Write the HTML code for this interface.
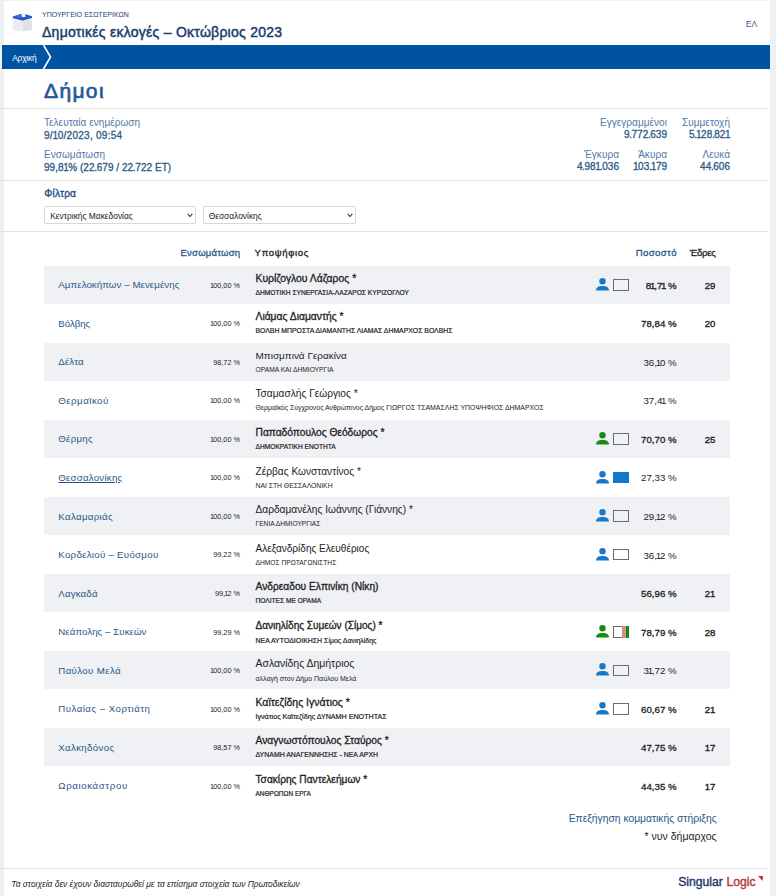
<!DOCTYPE html>
<html><head><meta charset="utf-8">
<style>
*{box-sizing:border-box;margin:0;padding:0}
.sb{-webkit-text-stroke:0.3px currentColor}
html,body{width:776px;height:896px;overflow:hidden;background:#eff0f2;font-family:"Liberation Sans",sans-serif}
#page{position:absolute;left:4px;top:1px;width:766px;height:895px;background:#fff}
.a{position:absolute;white-space:nowrap;line-height:1}
.hr{position:absolute;left:0;width:768px;height:1px;background:#e3e3e3}
.lbl{font-size:10px;color:#4f79a9;letter-spacing:0.05px}
.val{font-size:10px;color:#2c5986;-webkit-text-stroke:0.3px currentColor}
.val i{font-style:normal;margin:0 -0.5px}
.val b{font-weight:normal;margin:0 -0.35px}
.sel{height:17.5px;border:1px solid #d9d9d9;border-radius:2px;background:#fff;font-size:8.4px;color:#222}
.sel span{position:absolute;left:5.2px;top:5.4px}
.sel svg{position:absolute;right:2.1px;top:5.8px}
.th{font-size:9.6px;-webkit-text-stroke:0.3px currentColor;top:248.27px}
.row{position:absolute;left:44px;width:686px;height:38.3px}
.row.odd{background:#eff1f4}
.row .a{position:absolute}
.dn{left:14.3px;top:14.79px;font-size:9.7px;color:#285889}
.dn.ul{text-decoration:underline}
.inc{right:490px;top:16.12px;font-size:7.3px;color:#222}
.inc i{font-style:normal;margin:0 -0.9px}
.cn{left:211.5px;top:8.4px;font-size:10px;color:#222}
.cn.w{font-size:10.5px;top:8.0px;-webkit-text-stroke:0.3px currentColor}
.pt{left:211.5px;top:24.6px;font-size:6.6px;color:#222}
.pt.w{-webkit-text-stroke:0.2px currentColor}
.pi{position:absolute;left:552px;top:12.4px}
.bx{position:absolute;left:569px;top:13.5px;width:16px;height:11.6px;border:1px solid #6b6b6b}
.pc{right:53.4px;top:15.19px;font-size:9.7px;color:#222}
.pc i,.st i{font-style:normal;margin:0 -1.2px}
.pc.w{-webkit-text-stroke:0.3px currentColor}
.st{right:14.7px;top:15.27px;font-size:9.6px;color:#222;-webkit-text-stroke:0.35px currentColor}
</style></head><body>
<div id="page"></div>
<svg class="a" style="left:8px;top:8px" width="30" height="30" viewBox="0 0 30 30">
  <polygon points="4.9,11.5 14.6,13.2 14.6,23.3 4.9,22.2" fill="#ececf4"/>
  <polygon points="14.6,13.2 24,11.5 24,22.2 14.6,23.3" fill="#e0e0e9"/>
  <polygon points="4.8,8.4 12.5,6 17.5,6.2 24,8.2 24,10 14.7,12.8 4.8,10.3" fill="#2d58bd"/>
  <polygon points="6.5,8.6 12.8,6.8 14,9.8" fill="#3f6fd4"/>
  <polygon points="13,5 16.8,4.7 17.6,8.8 14.2,9.3" fill="#f3f7ff"/>
</svg>
<div class="a" style="left:42px;top:10.8px;font-size:7px;color:#26406e">ΥΠΟΥΡΓΕΙΟ ΕΣΩΤΕΡΙΚΩΝ</div>
<div class="a" style="left:42px;top:24.85px;font-size:14px;letter-spacing:0.26px;-webkit-text-stroke:0.45px currentColor;color:#1b3a6b">Δημοτικές εκλογές – Οκτώβριος 2023</div>
<div class="a" style="left:745.8px;top:19.52px;font-size:8.6px;color:#3b5a8c">ΕΛ</div>
<div class="a" style="left:2px;top:45px;width:768px;height:24px;background:#0053a0"></div>
<svg class="a" style="left:42px;top:45px" width="12" height="24" viewBox="0 0 12 24"><polyline points="1.5,0 8.5,12 1.5,24" fill="none" stroke="#fff" stroke-width="1.6"/></svg>
<div class="a" style="left:12.2px;top:53.8px;font-size:8.4px;letter-spacing:-0.2px;color:#fff">Αρχική</div>
<div class="a" style="left:44px;top:79.92px;font-size:21px;letter-spacing:1.35px;-webkit-text-stroke:0.7px currentColor;color:#1d5a97">Δήμοι</div>
<div class="hr" style="top:108px"></div>
<div class="a lbl" style="left:44px;top:118.1px">Τελευταία ενημέρωση</div>
<div class="a val" style="left:44px;top:130.54px;letter-spacing:0.27px">9/<i>1</i>0/2023, 09:54</div>
<div class="a lbl" style="left:44px;top:149.9px">Ενσωμάτωση</div>
<div class="a val" style="left:44px;top:162.94px;letter-spacing:0.04px">99,8<i>1</i>% (22<b>.</b>679 / 22<b>.</b>722 ΕΤ)</div>
<div class="a lbl" style="right:109px;top:118.1px;text-align:right">Εγγεγραμμένοι</div>
<div class="a val" style="right:109px;top:129.94px;text-align:right">9<b>.</b>772<b>.</b>639</div>
<div class="a lbl" style="right:46px;top:118.1px;text-align:right">Συμμετοχή</div>
<div class="a val" style="right:46px;top:129.94px;text-align:right">5<b>.</b><i>1</i>28<b>.</b>82<i>1</i></div>
<div class="a lbl" style="right:157px;top:149.9px;text-align:right">Έγκυρα</div>
<div class="a val" style="right:157px;top:162.24px;text-align:right">4<b>.</b>98<i>1</i><b>.</b>036</div>
<div class="a lbl" style="right:109px;top:149.9px;text-align:right">Άκυρα</div>
<div class="a val" style="right:109px;top:162.24px;text-align:right"><i>1</i>03<b>.</b><i>1</i>79</div>
<div class="a lbl" style="right:46px;top:149.9px;text-align:right">Λευκά</div>
<div class="a val" style="right:46px;top:162.24px;text-align:right">44<b>.</b>606</div>
<div class="hr" style="top:180px"></div>
<div class="a" style="left:44.3px;top:189px;font-size:10.2px;letter-spacing:0.1px;-webkit-text-stroke:0.35px currentColor;color:#1f4f86">Φίλτρα</div>
<div class="a sel" style="left:44px;top:206px;width:152px"><span>Κεντρικής Μακεδονίας</span><svg width="6" height="5" viewBox="0 0 6 5"><polyline points="0.6,0.9 3,3.5 5.4,0.9" fill="none" stroke="#333" stroke-width="1.1"/></svg></div>
<div class="a sel" style="left:202.5px;top:206px;width:153.2px"><span>Θεσσαλονίκης</span><svg width="6" height="5" viewBox="0 0 6 5"><polyline points="0.6,0.9 3,3.5 5.4,0.9" fill="none" stroke="#333" stroke-width="1.1"/></svg></div>
<div class="hr" style="top:231px"></div>
<div class="a th" style="right:535.8px;letter-spacing:0.18px;margin-right:-0.18px;color:#285889">Ενσωμάτωση</div>
<div class="a th" style="left:254.6px;letter-spacing:0.64px;color:#222">Υποψήφιος</div>
<div class="a th" style="right:99.4px;letter-spacing:0.38px;margin-right:-0.38px;color:#285889">Ποσοστό</div>
<div class="a th" style="right:60px;letter-spacing:-0.22px;margin-right:0.22px;color:#222">Έδρες</div>
<div class="row odd" style="top:265.5px"><div class="a dn" style="letter-spacing:0.074px">Αμπελοκήπων – Μενεμένης</div><div class="a inc"><i>1</i>00,00 %</div><div class="a cn w" style="font-size:10.37px;top:8.12px">Κυρίζογλου Λάζαρος *</div><div class="a pt w" style="font-size:6.67px;top:24.55px">ΔΗΜΟΤΙΚΗ ΣΥΝΕΡΓΑΣΙΑ-ΛΑΖΑΡΟΣ ΚΥΡΙΖΟΓΛΟΥ</div><svg class="pi" width="14" height="13" viewBox="0 0 14 13"><circle cx="6.5" cy="3.3" r="3.2" fill="#1877c9"/><path d="M0,12.6 C0,9 2.6,7.9 6.5,7.9 C10.4,7.9 13,9 13,12.6 Z" fill="#1877c9"/></svg><div class="bx"></div><div class="a pc w">8<i>1</i>,7<i>1</i> %</div><div class="a st">29</div></div>
<div class="row" style="top:304.05px"><div class="a dn" style="letter-spacing:-0.034px">Βόλβης</div><div class="a inc"><i>1</i>00,00 %</div><div class="a cn w" style="font-size:10.30px;top:8.18px">Λιάμας Διαμαντής *</div><div class="a pt w" style="font-size:6.86px;top:24.39px">ΒΟΛΒΗ ΜΠΡΟΣΤΑ ΔΙΑΜΑΝΤΗΣ ΛΙΑΜΑΣ ΔΗΜΑΡΧΟΣ ΒΟΛΒΗΣ</div><div class="a pc w">78,84 %</div><div class="a st">20</div></div>
<div class="row odd" style="top:342.6px"><div class="a dn" style="letter-spacing:0.094px">Δέλτα</div><div class="a inc">98,72 %</div><div class="a cn" style="font-size:9.98px;top:8.46px">Μπισμπινά Γερακίνα</div><div class="a pt" style="font-size:6.70px;top:24.53px">ΟΡΑΜΑ ΚΑΙ ΔΗΜΙΟΥΡΓΙΑ</div><div class="a pc">36,<i>1</i>0 %</div></div>
<div class="row" style="top:381.15px"><div class="a dn" style="letter-spacing:0.486px">Θερμαϊκού</div><div class="a inc"><i>1</i>00,00 %</div><div class="a cn" style="font-size:10.16px;top:8.30px">Τσαμασλής Γεώργιος *</div><div class="a pt" style="font-size:6.93px;top:24.33px">Θερμαϊκός Σύγχρονος Ανθρώπινος Δήμος ΓΙΩΡΓΟΣ ΤΣΑΜΑΣΛΗΣ ΥΠΟΨΗΦΙΟΣ ΔΗΜΑΡΧΟΣ</div><div class="a pc">37,4<i>1</i> %</div></div>
<div class="row odd" style="top:419.7px"><div class="a dn" style="letter-spacing:0.273px">Θέρμης</div><div class="a inc"><i>1</i>00,00 %</div><div class="a cn w" style="font-size:10.23px;top:8.24px">Παπαδόπουλος Θεόδωρος *</div><div class="a pt w" style="font-size:6.64px;top:24.58px">ΔΗΜΟΚΡΑΤΙΚΗ ΕΝΟΤΗΤΑ</div><svg class="pi" width="14" height="13" viewBox="0 0 14 13"><circle cx="6.5" cy="3.3" r="3.2" fill="#178a17"/><path d="M0,12.6 C0,9 2.6,7.9 6.5,7.9 C10.4,7.9 13,9 13,12.6 Z" fill="#178a17"/></svg><div class="bx"></div><div class="a pc w">70,70 %</div><div class="a st">25</div></div>
<div class="row" style="top:458.25px"><div class="a dn ul" style="letter-spacing:0.225px">Θεσσαλονίκης</div><div class="a inc"><i>1</i>00,00 %</div><div class="a cn" style="font-size:10.16px;top:8.30px">Ζέρβας Κωνσταντίνος *</div><div class="a pt" style="font-size:6.81px;top:24.44px">ΝΑΙ ΣΤΗ ΘΕΣΣΑΛΟΝΙΚΗ</div><svg class="pi" width="14" height="13" viewBox="0 0 14 13"><circle cx="6.5" cy="3.3" r="3.2" fill="#1877c9"/><path d="M0,12.6 C0,9 2.6,7.9 6.5,7.9 C10.4,7.9 13,9 13,12.6 Z" fill="#1877c9"/></svg><div class="bx" style="background:#1177cf;border-color:#1177cf"></div><div class="a pc">27,33 %</div></div>
<div class="row odd" style="top:496.79999999999995px"><div class="a dn" style="letter-spacing:0.335px">Καλαμαριάς</div><div class="a inc"><i>1</i>00,00 %</div><div class="a cn" style="font-size:10.16px;top:8.30px">Δαρδαμανέλης Ιωάννης (Γιάννης) *</div><div class="a pt" style="font-size:6.67px;top:24.56px">ΓΕΝΙΑ ΔΗΜΙΟΥΡΓΙΑΣ</div><svg class="pi" width="14" height="13" viewBox="0 0 14 13"><circle cx="6.5" cy="3.3" r="3.2" fill="#1877c9"/><path d="M0,12.6 C0,9 2.6,7.9 6.5,7.9 C10.4,7.9 13,9 13,12.6 Z" fill="#1877c9"/></svg><div class="bx"></div><div class="a pc">29,<i>1</i>2 %</div></div>
<div class="row" style="top:535.3499999999999px"><div class="a dn" style="letter-spacing:0.283px">Κορδελιού – Ευόσμου</div><div class="a inc">99,22 %</div><div class="a cn" style="font-size:10.06px;top:8.38px">Αλεξανδρίδης Ελευθέριος</div><div class="a pt" style="font-size:6.68px;top:24.55px">ΔΗΜΟΣ ΠΡΩΤΑΓΩΝΙΣΤΗΣ</div><svg class="pi" width="14" height="13" viewBox="0 0 14 13"><circle cx="6.5" cy="3.3" r="3.2" fill="#1877c9"/><path d="M0,12.6 C0,9 2.6,7.9 6.5,7.9 C10.4,7.9 13,9 13,12.6 Z" fill="#1877c9"/></svg><div class="bx"></div><div class="a pc">36,<i>1</i>2 %</div></div>
<div class="row odd" style="top:573.9px"><div class="a dn" style="letter-spacing:0.161px">Λαγκαδά</div><div class="a inc">99,<i>1</i>2 %</div><div class="a cn w" style="font-size:10.22px;top:8.25px">Ανδρεαδου Ελπινίκη (Νίκη)</div><div class="a pt w" style="font-size:6.62px;top:24.59px">ΠΟΛΙΤΕΣ ΜΕ ΟΡΑΜΑ</div><div class="a pc w">56,96 %</div><div class="a st">21</div></div>
<div class="row" style="top:612.45px"><div class="a dn" style="letter-spacing:0.059px">Νεάπολης – Συκεών</div><div class="a inc">99,29 %</div><div class="a cn w" style="font-size:10.04px;top:8.40px">Δανιηλίδης Συμεών (Σίμος) *</div><div class="a pt w" style="font-size:6.98px;top:24.29px">ΝΕΑ ΑΥΤΟΔΙΟΙΚΗΣΗ Σίμος Δανιηλίδης</div><svg class="pi" width="14" height="13" viewBox="0 0 14 13"><circle cx="6.5" cy="3.3" r="3.2" fill="#178a17"/><path d="M0,12.6 C0,9 2.6,7.9 6.5,7.9 C10.4,7.9 13,9 13,12.6 Z" fill="#178a17"/></svg><div class="bx" style="width:8.6px;border-right:none;background:#fff"></div><div class="bx" style="left:577.6px;width:7.4px;border:none;background:linear-gradient(90deg,#cf918c 0,#cf918c 4.1px,#168a16 4.1px)"></div><div class="a pc w">78,79 %</div><div class="a st">28</div></div>
<div class="row odd" style="top:651.0px"><div class="a dn" style="letter-spacing:0.365px">Παύλου Μελά</div><div class="a inc"><i>1</i>00,00 %</div><div class="a cn" style="font-size:10.45px;top:8.05px">Ασλανίδης Δημήτριος</div><div class="a pt" style="font-size:6.99px;top:24.28px">αλλαγή στον Δήμο Παύλου Μελά</div><svg class="pi" width="14" height="13" viewBox="0 0 14 13"><circle cx="6.5" cy="3.3" r="3.2" fill="#1877c9"/><path d="M0,12.6 C0,9 2.6,7.9 6.5,7.9 C10.4,7.9 13,9 13,12.6 Z" fill="#1877c9"/></svg><div class="bx"></div><div class="a pc">3<i>1</i>,72 %</div></div>
<div class="row" style="top:689.55px"><div class="a dn" style="letter-spacing:0.458px">Πυλαίας – Χορτιάτη</div><div class="a inc"><i>1</i>00,00 %</div><div class="a cn w" style="font-size:10.48px;top:8.03px">Καϊτεζίδης Ιγνάτιος *</div><div class="a pt w" style="font-size:7.15px;top:24.15px">Ιγνάτιος Καϊτεζίδης ΔΥΝΑΜΗ ΕΝΟΤΗΤΑΣ</div><svg class="pi" width="14" height="13" viewBox="0 0 14 13"><circle cx="6.5" cy="3.3" r="3.2" fill="#1877c9"/><path d="M0,12.6 C0,9 2.6,7.9 6.5,7.9 C10.4,7.9 13,9 13,12.6 Z" fill="#1877c9"/></svg><div class="bx"></div><div class="a pc w">60,67 %</div><div class="a st">21</div></div>
<div class="row odd" style="top:728.0999999999999px"><div class="a dn" style="letter-spacing:0.328px">Χαλκηδόνος</div><div class="a inc">98,57 %</div><div class="a cn w" style="font-size:10.27px;top:8.21px">Αναγνωστόπουλος Σταύρος *</div><div class="a pt w" style="font-size:6.95px;top:24.31px">ΔΥΝΑΜΗ ΑΝΑΓΕΝΝΗΣΗΣ - ΝΕΑ ΑΡΧΗ</div><div class="a pc w">47,75 %</div><div class="a st">17</div></div>
<div class="row" style="top:766.65px"><div class="a dn" style="letter-spacing:0.607px">Ωραιοκάστρου</div><div class="a inc"><i>1</i>00,00 %</div><div class="a cn w" style="font-size:10.20px;top:8.26px">Τσακίρης Παντελεήμων *</div><div class="a pt w" style="font-size:6.53px;top:24.67px">ΑΝΘΡΩΠΩΝ ΕΡΓΑ</div><div class="a pc w">44,35 %</div><div class="a st">17</div></div>
<div class="a" style="right:59.4px;top:813.76px;font-size:10.31px;color:#285889">Επεξήγηση κομματικής στήριξης</div>
<div class="a" style="right:59.4px;top:831.1px;font-size:10.51px;color:#222">* νυν δήμαρχος</div>
<div class="hr" style="top:868px"></div>
<div class="a" style="left:11.3px;top:879.6px;font-size:8.41px;font-style:italic;color:#222">Τα στοιχεία δεν έχουν διασταυρωθεί με τα επίσημα στοιχεία των Πρωτοδικείων</div>
<div class="a" style="left:678.2px;top:875.7px;font-size:12.2px;-webkit-text-stroke:0.4px currentColor;color:#1e3a6e">Singular</div>
<div class="a" style="left:726.5px;top:875.7px;font-size:12.2px;-webkit-text-stroke:0.4px currentColor;color:#b8363a">Logic</div>
<svg class="a" style="left:757.5px;top:876px" width="5" height="5" viewBox="0 0 5 5"><polygon points="0,0 5,0 4.6,5" fill="#c8323a"/></svg>
</body></html>
